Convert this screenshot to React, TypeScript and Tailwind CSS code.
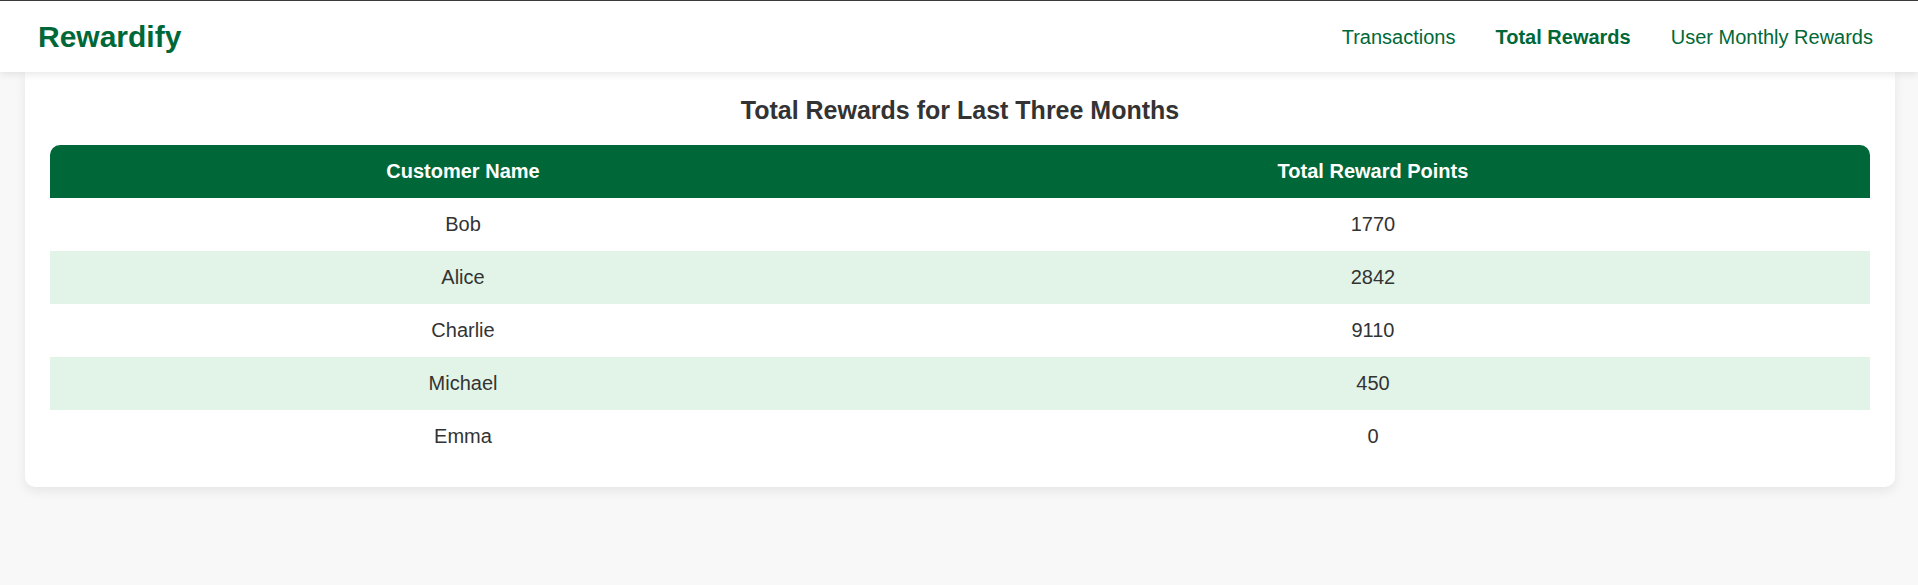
const rows = [
  { name: "Bob", points: 1770 },
  { name: "Alice", points: 2842 },
  { name: "Charlie", points: 9110 },
  { name: "Michael", points: 450 },
  { name: "Emma", points: 0 },
];

function Header() {
  return (
    <header className="relative z-10 flex h-[72px] items-center justify-between border-t border-[#3a3a3a] bg-white pl-[38px] pr-[45px] shadow-[0_2px_8px_rgba(0,0,0,0.1)]">
      <span className="text-[30px] font-bold leading-none text-[#006838]">Rewardify</span>
      <nav className="flex items-center gap-10 text-[20px] text-[#006838]">
        <a>Transactions</a>
        <a className="font-bold">Total Rewards</a>
        <a>User Monthly Rewards</a>
      </nav>
    </header>
  );
}

export default function App() {
  return (
    <div
      className="min-h-[585px] bg-[#f8f8f8]"
      style={{ fontFamily: '"Liberation Sans", Arial, sans-serif' }}
    >
      <Header />
      <div className="pl-[25px] pr-[23px]">
        <div className="rounded-b-[10px] bg-white px-[25px] pb-[24px] pt-[24px] shadow-[0_4px_12px_rgba(0,0,0,0.08)]">
          <h2 className="mb-[20px] text-center text-[25px] font-bold leading-[29px] text-[#333]">
            Total Rewards for Last Three Months
          </h2>
          <table className="w-full border-collapse text-center text-[20px] leading-[23px]">
            <thead>
              <tr className="bg-[#006838] text-white">
                <th className="w-[826px] rounded-tl-[10px] py-[15px] font-bold">Customer Name</th>
                <th className="rounded-tr-[10px] py-[15px] font-bold">Total Reward Points</th>
              </tr>
            </thead>
            <tbody className="text-[#333]">
              {rows.map((r, i) => (
                <tr key={r.name} className={i % 2 === 1 ? "bg-[#e2f4e8]" : "bg-white"}>
                  <td className="py-[15px]">{r.name}</td>
                  <td className="py-[15px]">{r.points}</td>
                </tr>
              ))}
            </tbody>
          </table>
        </div>
      </div>
    </div>
  );
}
